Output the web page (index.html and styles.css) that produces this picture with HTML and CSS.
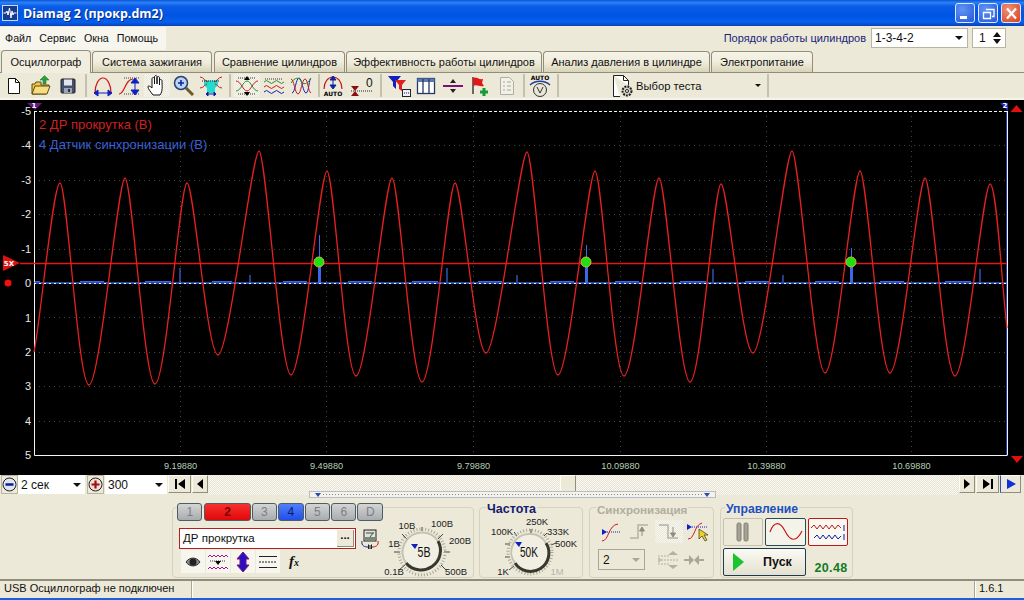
FILE: index.html
```html
<!DOCTYPE html>
<html lang="ru">
<head>
    <meta charset="UTF-8">
    <title>Diamag 2 (прокр.dm2)</title>
    <link rel="stylesheet" href="styles.css">
</head>
<body>
<div class="window">
    <!-- заголовок окна -->
    <div class="titlebar">
        <svg class="app-icon" width="16" height="16" viewBox="0 0 16 16"><rect x="0.5" y="0.5" width="15" height="15" fill="#163c90" stroke="#c8d8ff"/><path d="M1.500 8h2.500l1-2 1 4 1.500-7 1.500 10 1-7 1 4 .5-2h3" fill="none" stroke="#fff"/></svg>
        <span class="title-text">Diamag 2 (прокр.dm2)</span>
        <div class="win-buttons">
            <div class="win-btn"><svg width="19" height="19" viewBox="0 0 19 19"><rect x="4" y="12" width="7" height="3" fill="#fff"/></svg></div>
            <div class="win-btn"><svg width="19" height="19" viewBox="0 0 19 19"><path d="M7 5.500h8v7h-2M4.500 8.500h7v6h-7z" fill="none" stroke="#fff" stroke-width="1.300"/></svg></div>
            <div class="win-btn win-close"><svg width="19" height="19" viewBox="0 0 19 19"><path d="M5 4.500l9 10M14 4.500l-9 10" stroke="#fff" stroke-width="2.200"/></svg></div>
        </div>
    </div>

    <!-- меню -->
    <div class="menubar">
        <div class="menu">
            <span>Файл</span><span>Сервис</span><span>Окна</span><span>Помощь</span>
        </div>
        <div class="order">
            <span class="order-label">Порядок работы цилиндров</span>
            <div class="combo combo-order">1-3-4-2<i class="arrow"></i></div>
            <div class="combo combo-spin">1<span class="spin"><i class="up"></i><i class="down"></i></span></div>
        </div>
    </div>

    <!-- вкладки -->
    <div class="tabs">
        <div class="tab active">Осциллограф</div>
        <div class="tab">Система зажигания</div>
        <div class="tab">Сравнение цилиндров</div>
        <div class="tab">Эффективность работы цилиндров</div>
        <div class="tab">Анализ давления в цилиндре</div>
        <div class="tab">Электропитание</div>
    </div>

    <!-- панель инструментов -->
    <div class="toolbar">
        <div class="tool-group g1">
            <div class="tool"><svg width="20" height="20" viewBox="0 0 20 20"><path d="M4.500 2.500h7l4 4v11h-11z" fill="#fff" stroke="#111"/><path d="M11.500 2.500v4h4" fill="none" stroke="#111"/></svg></div>
            <div class="tool"><svg width="22" height="22" viewBox="0 0 22 22"><path d="M2 19V9h3l1-2h5v3h8l-3 9z" fill="#f2c84a" stroke="#5c4a10"/><path d="M2 19l3-8h15l-3 8z" fill="#f7dc80" stroke="#5c4a10"/><path d="M13 9V5h-3l4.500-4.500L19 5h-3v4z" fill="#2f9e3f" stroke="#1b6b26" stroke-width="0.500"/></svg></div>
            <div class="tool"><svg width="20" height="20" viewBox="0 0 20 20"><rect x="3" y="3" width="14" height="14" rx="1" fill="#46506e" stroke="#222"/><rect x="6" y="3.500" width="8" height="6" fill="#dfe4ee"/><rect x="6" y="12" width="8" height="5" fill="#9aa4ba"/><rect x="10" y="13" width="2" height="3" fill="#333"/></svg></div>
        </div>
        <div class="tool-group g2">
            <div class="tool"><svg width="24" height="24" viewBox="0 0 24 24"><path d="M4 19C4 10 8 4 12 4s8 6 8 15" fill="none" stroke="#d01818" stroke-width="1.200"/><path d="M3 19h18M3 19l4-3v6zM21 19l-4-3v6z" fill="#1020c0" stroke="#1020c0"/></svg></div>
            <div class="tool"><svg width="24" height="24" viewBox="0 0 24 24"><path d="M1 20c6 0 6-15 14-15" fill="none" stroke="#d01818" stroke-width="1.200"/><path d="M6 4h16M6 20h16" stroke="#444" stroke-dasharray="1 1"/><path d="M17 5v15M17 4l-4 5h8zM17 21l-4-5h8z" fill="#1020c0" stroke="#1020c0"/></svg></div>
            <div class="tool pressed"><svg width="22" height="24" viewBox="0 0 22 24"><path d="M7 21c-2-3-5-6-5-8s2-1 4 1V5c0-2 2.500-2 2.500 0v5-7c0-2 2.500-2 2.500 0v7-6c0-2 2.500-2 2.500 0v7-4c0-2 2.500-2 2.500 0 0 5 1 10-2 14z" fill="#fff" stroke="#111"/></svg></div>
            <div class="tool"><svg width="24" height="24" viewBox="0 0 24 24"><path d="M14 14l7 7" stroke="#6b5a2a" stroke-width="3"/><circle cx="9" cy="9" r="6.500" fill="#bcd4f4" stroke="#27406e" stroke-width="1.500"/><path d="M6 9h6M9 6v6" stroke="#1020a0" stroke-width="1.500"/></svg></div>
            <div class="tool"><svg width="24" height="24" viewBox="0 0 24 24"><path d="M5 5c3 2 11 2 14 0v6l-3 3v5H8v-5l-3-3z" fill="#22dcd0"/><path d="M1 3c4 0 5 5 8 5M23 3c-4 0-5 5-8 5M1 14c4 0 5-4 7-4M23 14c-4 0-5-4-7-4" fill="none" stroke="#d02020"/><path d="M7 20h10M7 20l2-2v4zM17 20l-2-2v4z" fill="#1020a0" stroke="#1020a0"/><path d="M3 7h18" stroke="#222" stroke-dasharray="1 1"/></svg></div>
        </div>
        <div class="tool-group g3">
            <div class="tool pressed"><svg width="24" height="24" viewBox="0 0 24 24"><path d="M1 7c5 0 7 10 11 10s6-10 11-10" fill="none" stroke="#d01818"/><path d="M1 17c5 0 7-10 11-10s6 10 11 10" fill="none" stroke="#2e8b2e"/><path d="M3 4h18M3 20h18" stroke="#333" stroke-dasharray="1 1"/><path d="M12 2l-3 4h6zM12 22l-3-4h6z"/></svg></div>
            <div class="tool"><svg width="24" height="24" viewBox="0 0 24 24"><path d="M3 5h18" stroke="#333" stroke-dasharray="1 1"/><path d="M2 8q2.500-3 5 0t5 0 5 0 5 0" fill="none" stroke="#2e8b2e"/><path d="M2 13q2.500-3 5 0t5 0 5 0 5 0" fill="none" stroke="#d01818"/><path d="M2 18q2.500-3 5 0t5 0 5 0 5 0" fill="none" stroke="#1020c0"/></svg></div>
            <div class="tool"><svg width="24" height="24" viewBox="0 0 24 24"><path d="M3 19C6 19 7 4 10 4s4 15 7 15 3-15 5-15" fill="none" stroke="#1020c0"/><path d="M2 5c3 0 4 15 7 15s4-15 7-15 3 13 6 14" fill="none" stroke="#d01818"/><path d="M2 9c4-6 8-6 10-2s6 4 10-3" fill="none" stroke="#2e8b2e"/></svg></div>
        </div>
        <div class="tool-group g4">
            <div class="tool"><svg width="24" height="24" viewBox="0 0 24 24"><path d="M3 15C3 8 7 3 12 3s9 5 9 12" fill="none" stroke="#c81818" stroke-width="1.200"/><path d="M12 3v11M12 2l-3 4h6zM12 15l-3-4h6z" fill="#1020a0" stroke="#1020a0"/><text x="12" y="22" class="auto-text">AUTO</text></svg></div>
            <div class="tool"><svg width="24" height="24" viewBox="0 0 24 24"><path d="M1 12h8l-4 5zM1 22h8l-4-5z" fill="#8a1010"/><path d="M1 17h22" stroke="#222" stroke-dasharray="1 1"/><text x="16" y="13" class="zero-text">0</text></svg></div>
        </div>
        <div class="tool-group g5">
            <div class="tool"><svg width="24" height="24" viewBox="0 0 24 24"><path d="M1 2h13l-5 6v7l-3-3V8z" fill="#1020c0"/><path d="M8 6h11l-4 5v6l-3-2v-4z" fill="#e02020"/><rect x="15.500" y="15.500" width="8" height="7" fill="#eef" stroke="#223"/><path d="M17 19h5" stroke="#223" stroke-dasharray="1 1"/></svg></div>
            <div class="tool"><svg width="20" height="20" viewBox="0 0 20 20"><rect x="1.500" y="2.500" width="17" height="15" fill="#fff" stroke="#223a66" stroke-width="1.300"/><rect x="1.500" y="2.500" width="17" height="3.500" fill="#5c78b0"/><path d="M7 3v14M13 3v14" stroke="#223a66" stroke-width="1.300"/></svg></div>
            <div class="tool"><svg width="22" height="22" viewBox="0 0 22 22"><path d="M1 11h20" stroke="#7b1178" stroke-width="2"/><path d="M11 4l-3 4h6zM11 18l-3-4h6z" fill="#222"/></svg></div>
            <div class="tool"><svg width="22" height="22" viewBox="0 0 22 22"><path d="M4 2v17" stroke="#222" stroke-width="1.300"/><path d="M4 3c4-2 5 2 10 1l-1 4 2 3c-5 1-7-2-11 0z" fill="#e01818"/><path d="M15 13v8M11 17h8" stroke="#159a35" stroke-width="3"/></svg></div>
            <div class="tool"><svg width="20" height="22" viewBox="0 0 20 22"><path d="M3.500 2.500h9l4 4v13h-13z" fill="#f2f1e9" stroke="#b0aea0"/><path d="M6 7h2M6 11h2M6 15h2M10 7h4M10 11h4M10 15h4" stroke="#a8a896"/></svg></div>
        </div>
        <div class="tool-group g6">
            <div class="tool"><svg width="24" height="24" viewBox="0 0 24 24"><text x="12" y="6" class="auto-text">AUTO</text><path d="M2 11c5-5 15-5 20 0" fill="none" stroke="#1c3fa8" stroke-width="1.500"/><circle cx="12" cy="16" r="6.500" fill="#e8e6d6" stroke="#333"/><path d="M9 13l3 6 3-6" fill="none" stroke="#333"/></svg></div>
        </div>
        <div class="test-select">
            <svg width="24" height="24" viewBox="0 0 24 24"><path d="M2.500 1.500h10l5 5v5M9 22.500H2.500v-21" fill="#fff" stroke="#222"/><path d="M12.500 1.500v5h5" fill="none" stroke="#222"/><circle cx="16" cy="17" r="4.500" fill="#d4d2c4" stroke="#222" stroke-width="2" stroke-dasharray="2 1"/><circle cx="16" cy="17" r="1.500" fill="#fff" stroke="#222"/></svg>
            <span class="test-label">Выбор теста</span>
            <i class="arrow test-arrow"></i>
        </div>
    </div>

    <!-- осциллограмма -->
    <div class="scope">
        <svg class="scope-svg" width="1024" height="375" viewBox="0 100 1024 375">
            <!-- сетка -->
            <g class="grid">
                <path d="M34 145.500h973M34 180.500h973M34 214.500h973M34 249.500h973M34 317.500h973M34 352.500h973M34 386.500h973M34 421.500h973"/>
                <path d="M180.500 111v344M326.500 111v344M473.500 111v344M620.500 111v344M766.500 111v344M911.500 111v344"/>
            </g>
            <!-- рамка -->
            <path d="M34.500 111v344.500h973" class="frame"/>
            <path d="M1006.500 111v344" class="frame-blue"/>
            <path d="M1007.500 111v344" class="frame-right"/>
            <path d="M34 111.500h973" class="frame-top"/>

            <!-- подписи оси -->
            <g class="axis-y">
                <text x="31" y="115">-5</text>
                <text x="31" y="149">-4</text>
                <text x="31" y="184">-3</text>
                <text x="31" y="218">-2</text>
                <text x="31" y="253">-1</text>
                <text x="31" y="287">0</text>
                <text x="31" y="322">1</text>
                <text x="31" y="356">2</text>
                <text x="31" y="390">3</text>
                <text x="31" y="425">4</text>
                <text x="31" y="459">5</text>
            </g>
            <g class="axis-x">
                <text x="180.500" y="469">9.19880</text>
                <text x="326.500" y="469">9.49880</text>
                <text x="473.500" y="469">9.79880</text>
                <text x="620.500" y="469">10.09880</text>
                <text x="766.500" y="469">10.39880</text>
                <text x="911.500" y="469">10.69880</text>
            </g>

            <text x="39" y="129" class="legend legend-red">2 ДР прокрутка (В)</text>
            <text x="39" y="149" class="legend legend-blue">4 Датчик синхронизации (В)</text>

            <!-- синхронизация -->
            <path class="sync-base" d="M34 283h973"/>
            <path class="sync-thick" d="M35 281.500h5M80 281.500h24M145 281.500h26M212 281.500h20M283 281.500h24M348 281.500h24M412 281.500h26M478 281.500h24M550 281.500h24M615 281.500h24M680 281.500h26M745 281.500h24M815 281.500h24M880 281.500h24M945 281.500h26"/>
            <path class="sync-spike" d="M180 282v-14M250 282v-7M447 282v-14M517 282v-7M713 282v-13M783 282v-7M980 282v-13"/>
            <path class="sync" d="M319.500 284v-49M586.500 284v-39M851.500 284v-36"/>
            <path class="sync-wide" d="M319.500 284v-22M586.500 284v-20M851.500 284v-20"/>
            <path class="zero-dash" d="M34 283.500h973"/>

            <!-- сигнал -->
            <path class="trigger" d="M20 263.500h987"/>
            <path class="signal" d="M34 352C40 325 53 183 60 183S78 385 89 385S118 178 125 178S144 384 155 384S180 183 187 183S207 355 218 355S252 151 259 151S280 375 291 375S320 171 327 171S345 376 356 376S385 178 392 178S411 382 422 382S448 183 455 183S475 353 486 353S520 152 527 152S547 375 558 375S588 171 595 171S613 376 624 376S652 178 659 178S679 382 690 382S714 184 721 184S742 353 753 353S785 151 792 151S814 373 825 373S853 171 860 171S879 373 890 373S918 178 925 178S944 376 955 376S983 184 990 184S1002 290 1007 328"/>
            <circle cx="319" cy="262" r="5" class="dot"/>
            <circle cx="586" cy="262" r="5" class="dot"/>
            <circle cx="851" cy="262" r="5" class="dot"/>

            <!-- маркеры -->
            <path d="M27 103h15l-7 7z" fill="#6a1b8a"/>
            <text x="34" y="108" class="marker-text">1</text>
            <path d="M1000 103h8v8z" fill="#1c2fd0"/>
            <text x="1005" y="108" class="marker-text">2</text>
            <path d="M1016.500 105l6 7h-12z" fill="#e01010"/>
            <path d="M1017 463l6-7h-12z" fill="#e01010"/>
            <path d="M3 255l17 8-17 8z" fill="#e01010"/>
            <text x="9" y="266" class="marker-text">5X</text>
            <circle cx="8" cy="283" r="3.500" fill="#f01010"/>
        </svg>
    </div>

    <!-- полоса прокрутки -->
    <div class="scrollrow">
        <div class="zoom-btn minus"><svg width="15" height="15" viewBox="0 0 15 15"><circle cx="7.500" cy="7.500" r="6.500" fill="#dfe6f2" stroke="#222"/><path d="M3.500 7.500h8" stroke="#101a90" stroke-width="2.500"/></svg></div>
        <div class="combo combo-time">2 сек<i class="arrow"></i></div>
        <div class="zoom-btn plus"><svg width="15" height="15" viewBox="0 0 15 15"><circle cx="7.500" cy="7.500" r="6.500" fill="#f2dfd6" stroke="#222"/><path d="M3.500 7.500h8M7.500 3.500v8" stroke="#a01010" stroke-width="2.200"/></svg></div>
        <div class="combo combo-count">300<i class="arrow"></i></div>
        <div class="sb-btn sb-wide"><svg width="12" height="10" viewBox="0 0 12 10"><path d="M1 0h2v10H1zM11 0v10L4 5z"/></svg></div>
        <div class="sb-btn"><svg width="6" height="10" viewBox="0 0 6 10"><path d="M6 0v10L0 5z"/></svg></div>
        <div class="sb-track"><div class="sb-thumb"></div></div>
        <div class="sb-btn"><svg width="6" height="10" viewBox="0 0 6 10"><path d="M0 0v10l6-5z"/></svg></div>
        <div class="sb-btn sb-wide"><svg width="12" height="10" viewBox="0 0 12 10"><path d="M9 0h2v10H9zM1 0v10l7-5z"/></svg></div>
        <div class="sb-btn sb-play"><svg width="10" height="10" viewBox="0 0 10 10"><path d="M1 0v10l9-5z" fill="#1030e0"/></svg></div>
    </div>
    <div class="splitter"><i class="split-left"></i><i class="split-right"></i></div>

    <!-- нижняя панель -->
    <div class="panel">
        <div class="box box-channels">
            <div class="chan-col">
                <div class="channels">
                    <div class="chan">1</div>
                    <div class="chan chan-red">2</div>
                    <div class="chan">3</div>
                    <div class="chan chan-blue">4</div>
                    <div class="chan">5</div>
                    <div class="chan">6</div>
                    <div class="chan">D</div>
                </div>
                <div class="name-row">
                    <div class="name-input">ДР прокрутка<span class="dots">...</span></div>
                    <svg width="20" height="20" viewBox="0 0 20 20"><rect x="4" y="1" width="12" height="11" fill="#dfe4d8" stroke="#222"/><path d="M6 4h8M10 8l3-4" stroke="#444"/><rect x="5" y="8" width="10" height="3" fill="#7b8a76"/><path d="M2 12c-1 5 3 6 6 6" fill="none" stroke="#1020a0"/><path d="M18 12c1 5-3 6-6 6" fill="none" stroke="#c01010"/><path d="M8 15v6l3-3zM12 15v6l-3-3z" fill="#222"/></svg>
                </div>
                <div class="chan-tools">
                    <div class="chan-tool"><svg width="18" height="14" viewBox="0 0 20 16"><path d="M2 8c4-6 12-6 16 0-4 6-12 6-16 0z" fill="#888" stroke="#222"/><circle cx="10" cy="8" r="4" fill="#222"/></svg></div>
                    <div class="chan-tool"><svg width="22" height="20" viewBox="0 0 22 20"><path d="M1 5l2-2 2 2 2-2 2 2 2-2 2 2 2-2 2 2 2-2 2 2" fill="none" stroke="#a01090"/><path d="M1 17l2-2 2 2 2-2 2 2 2-2 2 2 2-2 2 2 2-2 2 2" fill="none" stroke="#a01090"/><path d="M3 9h16" stroke="#333" stroke-dasharray="1 1"/><path d="M8 9h6l-3 4z"/></svg></div>
                    <div class="chan-tool"><svg width="20" height="22" viewBox="0 0 20 22"><path d="M10 1l6 7h-3v6h3l-6 7-6-7h3V8H4z" fill="#2a10c0" stroke="#7b1178"/></svg></div>
                    <div class="chan-tool"><svg width="20" height="14" viewBox="0 0 20 14"><path d="M1 1.500h18M1 12.500h18" stroke="#222"/><path d="M1 7h18" stroke="#222" stroke-dasharray="2 1"/></svg></div>
                    <span class="fx">f<small>x</small></span>
                </div>
            </div>
            <!-- ручка вольт -->
            <svg class="knob-volt" width="90" height="60" viewBox="384 517 90 60">
                <g class="knob-ticks">
                    <path d="M400 570l6-5M395 552h6M403 534l5 5M423 527v4M444 534l-5 5M451 552h-6M447 570l-5-5"/>
                    <circle cx="423" cy="552" r="23" stroke-dasharray="1 2" class="ticks-fine"/>
                </g>
                <circle cx="423" cy="552" r="19.500" fill="#f1efe2"/>
                <path d="M407 563a19.500 19.500 0 0 0 32-22" class="ring-dark"/>
                <path d="M407 563a19.500 19.500 0 0 1 16-30.500a19.500 19.500 0 0 1 16 8.500" class="ring-light"/>
                <path d="M412 544h7l-3 5z" fill="#1020c0"/>
                <text x="425" y="557" textLength="13" lengthAdjust="spacingAndGlyphs" class="knob-value">5В</text>
                <text x="408" y="528.500" class="knob-label">10В</text>
                <text x="443" y="527" class="knob-label">100В</text>
                <text x="461" y="544" class="knob-label">200В</text>
                <text x="395" y="547" class="knob-label">1В</text>
                <text x="395" y="575" class="knob-label">0.1В</text>
                <text x="457" y="575" class="knob-label">500В</text>
            </svg>
        </div>

        <div class="box box-freq">
            <div class="box-title title-navy">Частота</div>
            <svg width="102" height="69" viewBox="480 508 102 69">
                <g class="knob-ticks">
                    <path d="M514 566l-5 4M505 557h5M505 544h5M514 532l3 4M531 529v6M547 533l-3 3M556 543l-5 2"/>
                    <circle cx="530" cy="552" r="22" stroke-dasharray="1 2" class="ticks-fine"/>
                </g>
                <circle cx="530" cy="552" r="18" fill="#f1efe2"/>
                <path d="M515 563a18 18 0 0 0 31-20" class="ring-dark"/>
                <path d="M515 563a18 18 0 0 1 15-29a18 18 0 0 1 16 9" class="ring-light"/>
                <path d="M515 542h7l-3 5z" fill="#1020c0"/>
                <text x="529" y="557" textLength="18" lengthAdjust="spacingAndGlyphs" class="knob-value">50K</text>
                <text x="502" y="534.500" class="knob-label">100K</text>
                <text x="537" y="524.500" class="knob-label">250K</text>
                <text x="558" y="534.500" class="knob-label">333K</text>
                <text x="566" y="546.500" class="knob-label">500K</text>
                <text x="503" y="574.500" class="knob-label">1K</text>
                <text x="557" y="574.500" class="knob-label knob-off">1M</text>
            </svg>
        </div>

        <div class="box box-sync">
            <div class="box-title title-gray">Синхронизация</div>
            <div class="sync-row">
                <div class="sync-tool"><svg width="22" height="22" viewBox="0 0 22 22"><path d="M2 8l5 3-5 3z" fill="#1020c0"/><path d="M7 11h14" stroke="#1020c0" stroke-dasharray="1 1"/><path d="M2 20c7 0 6-16 16-17" fill="none" stroke="#d01818"/></svg></div>
                <div class="sync-tool"><svg width="22" height="22" viewBox="0 0 22 22"><path d="M1 17h8V4h10" fill="none" stroke="#b4b2a4" stroke-width="1.500"/><path d="M13 15V7M13 6l-2.500 4h5z" fill="#8e8c80" stroke="#8e8c80"/></svg></div>
                <div class="sync-tool sync-on"><svg width="22" height="22" viewBox="0 0 22 22"><path d="M1 4h9v13h10" fill="none" stroke="#b4b2a4" stroke-width="1.500"/><path d="M15 6v8M15 16l-2.500-4h5z" fill="#8e8c80" stroke="#8e8c80"/></svg></div>
                <div class="sync-tool"><svg width="24" height="22" viewBox="0 0 24 22"><path d="M1 3l5 3-5 3z" fill="#1020c0"/><path d="M6 6h15" stroke="#1020c0" stroke-dasharray="1 1"/><path d="M2 18c7 0 6-14 14-16" fill="none" stroke="#d01818"/><path d="M13 8v10l3-3 3 5 2-1-3-5h4z" fill="#f0d020" stroke="#333" stroke-width="0.700"/></svg></div>
            </div>
            <div class="sync-row2">
                <div class="combo combo-sync">2<i class="arrow arrow-off"></i></div>
                <svg class="sync-i1" width="22" height="20" viewBox="0 0 22 20"><path d="M1 6h12M1 10h20M1 14h12" stroke="#b4b2a4" stroke-dasharray="2 1"/><path d="M16 1l-5 4h10zM16 19l-5-4h10z" fill="#b4b2a4"/><path d="M1 7l5 3-5 3z" fill="#c4c2b4"/></svg>
                <svg class="sync-i2" width="20" height="14" viewBox="0 0 20 14"><path d="M0 7h8M20 7h-8" stroke="#a8a698" stroke-width="2"/><path d="M10 7L5 2v10zM10 7l5-5v10z" fill="#a8a698"/></svg>
            </div>
        </div>

        <div class="box box-ctrl">
            <div class="box-title title-blue">Управление</div>
            <div class="ctrl-grid">
                <div class="ctrl-btn ctrl-pause"><svg width="14" height="20" viewBox="0 0 14 20"><rect x="1" y="1" width="4" height="18" rx="1.500" fill="#a4a296" stroke="#807e72"/><rect x="8" y="1" width="4" height="18" rx="1.500" fill="#a4a296" stroke="#807e72"/></svg></div>
                <div class="ctrl-btn ctrl-sine"><svg width="34" height="22" viewBox="0 0 34 22"><path d="M1 11C5 0 11 0 16 10s11 12 17 0" fill="none" stroke="#c81818" stroke-width="1.200"/></svg></div>
                <div class="ctrl-btn ctrl-wave"><svg width="36" height="24" viewBox="0 0 36 24"><path d="M1 8l3-3 3 4 3-4 3 4 3-4 3 4 3-4 3 4 3-4 3 3" fill="none" stroke="#c01818"/><path d="M4 18l3-3 3 4 3-4 3 4 3-4 3 4 3-4 3 4 3-3" fill="none" stroke="#1020a0"/><path d="M34 5v6M34 14v6" stroke="#1020a0"/></svg></div>
                <div class="ctrl-btn ctrl-start"><svg width="12" height="18" viewBox="0 0 12 18"><path d="M0 0v18l11-9z" fill="#19c42c"/></svg><span>Пуск</span></div>
                <div class="ctrl-time">20.48</div>
            </div>
        </div>
    </div>

    <!-- строка состояния -->
    <div class="statusbar">
        <div class="st-main">USB Осциллограф не подключен</div>
        <div class="st-mid"></div>
        <div class="st-ver">1.6.1</div>
    </div>
</div>
</body>
</html>
```

FILE: styles.css
```css
* {
    box-sizing: border-box;
}

html, body {
    margin: 0;
    padding: 0;
    overflow: hidden;
}

body {
    width: 1024px;
    height: 600px;
    font-family: 'Liberation Sans', sans-serif;
    font-size: 12px;
    color: #111;
    background: #ece9d8;
}

.window {
    position: relative;
    width: 1024px;
    height: 600px;
    display: flex;
    flex-direction: column;
    border-bottom: 2px solid #1c5fd8;
}

/* заголовок окна */
.titlebar {
    height: 26px;
    display: flex;
    align-items: center;
    padding: 0 3px 0 2px;
    background: linear-gradient(#0a55d8 0%, #2a80f5 10%, #0a5ce8 25%, #0054e3 60%, #0560ee 85%, #0a3fb8 100%);
}

.app-icon {
    margin-right: 5px;
}

.title-text {
    color: #fff;
    font-size: 12.500px;
    font-weight: bold;
    font-family: 'Open Sans', 'Liberation Sans', sans-serif;
    text-shadow: 1px 1px 0 #0a2a80;
}

.win-buttons {
    margin-left: auto;
    display: flex;
    gap: 3px;
}

.win-btn {
    width: 20px;
    height: 20px;
    border: 1px solid #dfe8ff;
    border-radius: 3px;
    background: radial-gradient(circle at 35% 30%, #5f94f5, #2458d8);
}

.win-btn svg {
    display: block;
}

.win-close {
    background: radial-gradient(circle at 35% 30%, #f0907a, #d8401c);
}

/* меню */
.menubar {
    height: 24px;
    display: flex;
    align-items: center;
    justify-content: space-between;
}

.menu {
    width: 166px;
    height: 23px;
    display: flex;
    align-items: center;
    padding-left: 5px;
    gap: 8px;
    background: #f6f5ee;
    font-size: 10.700px;
}

.order {
    display: flex;
    align-items: center;
    padding-right: 18px;
}

.order-label {
    color: #1a2478;
    font-size: 11px;
    margin-right: 5px;
}

.combo {
    position: relative;
    background: #fff;
    border: 1px solid #b8b5a2;
    font-size: 12px;
    padding-left: 3px;
    display: flex;
    align-items: center;
}

.combo-order {
    width: 97px;
    height: 20px;
    margin-right: 4px;
}

.combo-spin {
    width: 34px;
    height: 20px;
    padding-left: 6px;
}

.arrow {
    position: absolute;
    right: 4px;
    top: 50%;
    margin-top: -2px;
    border-left: 4px solid transparent;
    border-right: 4px solid transparent;
    border-top: 4px solid #111;
}

.arrow-off {
    border-top-color: #a8a698;
}

.spin i {
    position: absolute;
    right: 4px;
    border-left: 4px solid transparent;
    border-right: 4px solid transparent;
}

.spin .up {
    top: 3px;
    border-bottom: 5px solid #111;
}

.spin .down {
    bottom: 3px;
    border-top: 5px solid #111;
}

/* вкладки */
.tabs {
    height: 22px;
    display: flex;
    padding-left: 1px;
    font-size: 11px;
}

.tab {
    display: flex;
    align-items: center;
    justify-content: center;
    height: 21px;
    margin-top: 1px;
    border: 1px solid #918f7c;
    border-bottom: none;
    border-radius: 4px 4px 0 0;
    background: linear-gradient(#f6f4e8, #f0eddc 50%, #d8d4b8);
    margin-right: 1px;
}

.tab:nth-child(1) { width: 90px; }
.tab:nth-child(2) { width: 120px; }
.tab:nth-child(3) { width: 131px; margin-left: 1px; }
.tab:nth-child(4) { width: 196px; }
.tab:nth-child(5) { width: 167px; }
.tab:nth-child(6) { width: 102px; }

.tab.active {
    height: 23px;
    margin-top: 0;
    background: #f1eee0;
    position: relative;
    z-index: 1;
}

/* панель инструментов */
.toolbar {
    height: 28px;
    display: flex;
    align-items: stretch;
    padding-left: 1px;
    border-top: 1px solid #8f8d7c;
    border-bottom: 2px solid #f5f4ea;
    background: #ece9d8;
}

.tool-group {
    display: flex;
    gap: 1px;
    border-right: 2px solid #c4c1ae;
    margin: 1px 0;
}

.g1 { width: 86px; }
.g2 { width: 144px; padding-left: 3px; }
.g3 { width: 89px; padding-left: 3px; }
.g4 { width: 62px; gap: 3px; }
.g5 { width: 143px; padding-left: 4px; }
.g6 { width: 34px; padding-left: 2px; }

.tool {
    width: 26px;
    display: flex;
    align-items: center;
    justify-content: center;
    flex: none;
}

.tool.pressed {
    background: repeating-conic-gradient(#f8f7f0 0 25%, #e8e6d8 0 50%) 0 0 / 2px 2px;
}

.auto-text {
    font-family: 'DejaVu Sans', sans-serif;
    font-size: 6px;
    font-weight: bold;
    text-anchor: middle;
}

.zero-text {
    font-family: 'Liberation Sans', sans-serif;
    font-size: 12px;
    fill: #111;
}

.test-select {
    position: relative;
    width: 210px;
    display: flex;
    align-items: center;
    padding-left: 52px;
    border-right: 2px solid #c4c1ae;
    margin: 1px 0;
}

.test-label {
    font-size: 11.200px;
    margin-left: 1px;
}

.test-arrow {
    right: 6px;
    border-left-width: 3px;
    border-right-width: 3px;
    border-top-width: 3px;
}

/* осциллограмма */
.scope {
    height: 375px;
    background: #000;
}

.scope-svg {
    display: block;
}

.grid path {
    fill: none;
    stroke: #44443a;
    stroke-dasharray: 1 4;
}

.frame {
    fill: none;
    stroke: #f4f4f4;
}

.frame-right {
    stroke: #f4f4f4;
}

.frame-blue {
    stroke: #2038c0;
}

.frame-top {
    stroke: #f4f4f4;
    stroke-dasharray: 3 2;
}

.axis-y text {
    fill: #e8e8e8;
    font-size: 11px;
    text-anchor: end;
}

.axis-x text {
    fill: #b4d0b4;
    font-size: 9.200px;
    text-anchor: middle;
}

.legend {
    font-size: 13px;
}

.legend-red {
    fill: #d02020;
}

.legend-blue {
    fill: #3a60d8;
}

.sync-base {
    stroke: #3a68e8;
    stroke-width: 1.500;
}

.sync {
    fill: none;
    stroke: #3a68e8;
}

.sync-thick {
    fill: none;
    stroke: #3a68e8;
}

.sync-spike {
    fill: none;
    stroke: #3a68e8;
    stroke-width: 1.200;
}

.sync-wide {
    fill: none;
    stroke: #3a68e8;
    stroke-width: 3;
}

.zero-dash {
    stroke: #f4f8ff;
    stroke-dasharray: 2 3;
}

.trigger {
    stroke: #e01818;
    stroke-width: 1.400;
}

.signal {
    fill: none;
    stroke: #e82020;
    stroke-width: 1.300;
}

.dot {
    fill: #22e010;
    stroke: #c8b840;
}

.marker-text {
    fill: #fff;
    font-size: 7px;
    font-weight: bold;
    font-family: 'DejaVu Sans', sans-serif;
    text-anchor: middle;
}

/* полоса прокрутки */
.scrollrow {
    height: 20px;
    display: flex;
    align-items: stretch;
    background: #ece9d8;
}

.zoom-btn {
    width: 17px;
    height: 19px;
    display: flex;
    align-items: center;
    justify-content: center;
    border: 1px solid #b8b5a2;
    background: #ece9d8;
}

.minus {
    margin-left: 1px;
}

.plus {
    margin-left: 2px;
}

.combo-time {
    width: 67px;
    height: 19px;
    border: none;
    font-size: 12px;
}

.combo-count {
    width: 62px;
    height: 19px;
    border: none;
    margin-left: 1px;
}

.sb-btn {
    width: 16px;
    height: 18px;
    flex: none;
    display: flex;
    align-items: center;
    justify-content: center;
    background: #ece9d8;
    border: 1px solid;
    border-color: #fdfcf6 #8f8d7c #8f8d7c #fdfcf6;
    margin-left: 1px;
}

.sb-wide {
    width: 23px;
}

.sb-play {
    width: 21px;
    border-left: 1px solid #3050c0;
}

.sb-track {
    width: 750px;
    display: flex;
    padding-left: 352px;
    background: repeating-conic-gradient(#faf9f3 0 25%, #e6e3d2 0 50%) 0 0 / 2px 2px;
}

.sb-thumb {
    width: 16px;
    height: 18px;
    background: #ece9d8;
    border: 1px solid;
    border-color: #fdfcf6 #8f8d7c #8f8d7c #fdfcf6;
}

.splitter {
    position: absolute;
    left: 309px;
    top: 491px;
    width: 407px;
    height: 7px;
    background: #f4f3ea;
    border: 1px solid #b8bcc8;
    background-image: repeating-linear-gradient(90deg, #8a8a90 0 1px, transparent 1px 3px);
    background-size: 380px 1px;
    background-position: center;
    background-repeat: no-repeat;
}

.splitter i {
    position: absolute;
    top: 1px;
    border-left: 3px solid transparent;
    border-right: 3px solid transparent;
    border-top: 4px solid #2a4ab0;
}

.split-left { left: 5px; }
.split-right { right: 5px; }

/* нижняя панель */
.panel {
    height: 86px;
    display: flex;
    align-items: flex-start;
    padding-left: 172px;
    border-bottom: 2px solid #8f8d7c;
}

.box {
    position: relative;
    height: 71px;
    margin-top: 12px;
    margin-right: 5px;
    border: 1px solid #d4d1be;
    border-radius: 4px;
    flex: none;
}

.box-title {
    position: absolute;
    top: -5px;
    left: 6px;
    padding: 0 1px;
    background: #ece9d8;
    font-size: 12.500px;
    font-weight: bold;
    line-height: 13px;
}

.title-navy { color: #14206e; }
.title-gray { color: #b0ae9f; font-size: 11.600px; }
.title-blue { color: #1c50c0; left: 4px; font-size: 12.200px; }

.box-channels {
    width: 302px;
    display: flex;
    align-items: flex-start;
}

.box-freq {
    width: 104px;
    margin-right: 6px;
}

.box-sync {
    width: 125px;
    margin-right: 6px;
}

.box-ctrl {
    width: 133px;
    margin-right: 0;
}

.chan-col {
    width: 210px;
    flex: none;
    margin-top: -5px;
    padding-left: 4px;
}

.channels {
    display: flex;
    gap: 1px;
}

.chan {
    width: 26px;
    height: 18px;
    display: flex;
    align-items: center;
    justify-content: center;
    border: 1px solid #4c5c68;
    border-radius: 3px;
    background: linear-gradient(#d4d6d4, #a8acae);
    color: #7c8084;
    font-size: 12px;
}

.chan-red {
    width: 47px;
    margin-left: 1px;
    background: linear-gradient(#f83030, #e00808);
    color: #700;
    font-weight: bold;
}

.chan-blue {
    background: linear-gradient(#5080fa, #2050e8);
    color: #0c1870;
}

.name-row {
    display: flex;
    align-items: center;
    gap: 4px;
    margin: 7px 0 0 2px;
    height: 21px;
}

.name-input {
    position: relative;
    width: 177px;
    height: 21px;
    background: #fff;
    border: 1px solid #b02020;
    padding-left: 3px;
    font-size: 11.500px;
    line-height: 19px;
}

.dots {
    position: absolute;
    right: 1px;
    top: 1px;
    width: 17px;
    height: 17px;
    line-height: 11px;
    text-align: center;
    font-weight: bold;
    background: #ece9d8;
    border-right: 1px solid #8f8d7c;
    border-bottom: 1px solid #8f8d7c;
}

.chan-tools {
    display: flex;
    gap: 1px;
    margin: 1px 0 0 4px;
    height: 23px;
}

.chan-tool {
    width: 24px;
    height: 23px;
    display: flex;
    align-items: center;
    justify-content: center;
    background: #f6f5ee;
}

.fx {
    margin-left: 8px;
    font-family: 'Liberation Serif', serif;
    font-style: italic;
    font-weight: bold;
    font-size: 15px;
    line-height: 23px;
}

.fx small {
    font-size: 10px;
}

.knob-volt {
    margin-top: 9px;
    flex: none;
}

.knob-ticks path {
    stroke: #444;
    fill: none;
}

.ticks-fine {
    fill: none;
    stroke: #a8a698;
    stroke-width: 3;
}

.ring-dark {
    fill: none;
    stroke: #38382e;
    stroke-width: 3;
}

.ring-light {
    fill: none;
    stroke: #c4c2b2;
    stroke-width: 2;
}

.knob-value {
    font-size: 14px;
    text-anchor: middle;
    fill: #111;
}

.knob-label {
    font-size: 9.500px;
    text-anchor: middle;
    fill: #222;
}

.knob-off {
    fill: #b8b6a8;
}

.sync-row {
    display: flex;
    gap: 1px;
    padding: 12px 0 0 7px;
}

.sync-tool {
    width: 28px;
    height: 23px;
    display: flex;
    align-items: center;
    justify-content: center;
}

.sync-on {
    background: repeating-conic-gradient(#f8f7f0 0 25%, #e8e6d8 0 50%) 0 0 / 2px 2px;
}

.sync-row2 {
    display: flex;
    align-items: center;
    margin-top: 6px;
    padding-left: 8px;
}

.combo-sync {
    width: 47px;
    height: 21px;
    background: #ece9d8;
    border-color: #a8a698;
    padding-left: 4px;
}

.sync-i1 {
    margin-left: 12px;
}

.sync-i2 {
    margin-left: 5px;
}

.ctrl-grid {
    display: grid;
    grid-template-columns: 40px 41px 40px;
    grid-template-rows: 28px 28px;
    gap: 2px 2px;
    padding: 10px 0 0 2px;
}

.ctrl-btn {
    display: flex;
    align-items: center;
    justify-content: center;
    border-radius: 2px;
}

.ctrl-pause {
    border: 1px solid #c4c1ae;
}

.ctrl-sine {
    border: 1px solid #2a4a58;
    background: #f4f3ea;
}

.ctrl-wave {
    border: 1px solid #c01818;
    background: #f8f7f0;
}

.ctrl-start {
    grid-column: 1 / span 2;
    justify-content: flex-start;
    padding-left: 9px;
    border: 1px solid #1e3c50;
    background: linear-gradient(#fbfaf4, #e4e1d0);
    font-weight: bold;
    font-size: 12.500px;
}

.ctrl-start span {
    margin-left: 18px;
}

.ctrl-time {
    align-self: end;
    text-align: center;
    padding-left: 6px;
    color: #127a1e;
    font-weight: bold;
    font-size: 12.500px;
    letter-spacing: 0.300px;
    padding-bottom: 1px;
    white-space: nowrap;
}

/* строка состояния */
.statusbar {
    flex: 1;
    display: flex;
    font-size: 11px;
    line-height: 15px;
}

.st-main {
    width: 192px;
    padding-left: 4px;
    white-space: nowrap;
    border-right: 1px solid #a8a698;
}

.st-mid {
    width: 783px;
    border-left: 1px solid #fff;
    border-right: 1px solid #a8a698;
}

.st-ver {
    flex: 1;
    padding-left: 3px;
    border-left: 1px solid #fff;
}
```
